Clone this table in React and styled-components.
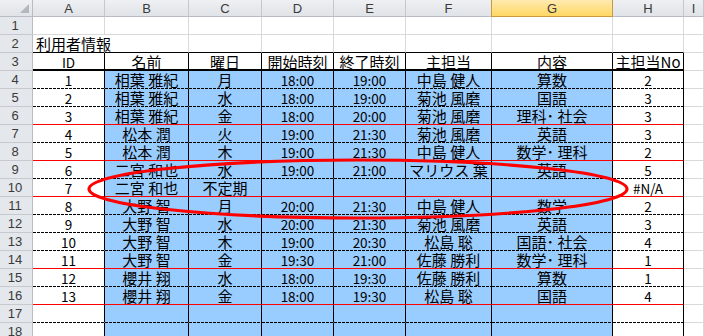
import React from 'react'
import styled, { createGlobalStyle } from 'styled-components'

const GlobalStyle = createGlobalStyle`
  html, body {
    margin: 0;
    padding: 0;
    background: #fff;
    overflow: hidden;
  }
`

const LETTERS = ['A', 'B', 'C', 'D', 'E', 'F', 'G', 'H', 'I']

// id, name, day, start, end, teacher, subject, teacherNo
const records = [
  ['1', '相葉 雅紀', '月', '18:00', '19:00', '中島 健人', '算数', '2'],
  ['2', '相葉 雅紀', '水', '18:00', '19:00', '菊池 風磨', '国語', '3'],
  ['3', '相葉 雅紀', '金', '18:00', '20:00', '菊池 風磨', '理科･ 社会', '3'],
  ['4', '松本 潤', '火', '19:00', '21:30', '菊池 風磨', '英語', '3'],
  ['5', '松本 潤', '木', '19:00', '21:30', '中島 健人', '数学･ 理科', '2'],
  ['6', '二宮 和也', '水', '19:00', '21:00', 'マリウス 葉', '英語', '5'],
  ['7', '二宮 和也', '不定期', '', '', '', '', '#N/A'],
  ['8', '大野 智', '月', '20:00', '21:30', '中島 健人', '数学', '2'],
  ['9', '大野 智', '水', '20:00', '21:30', '菊池 風磨', '英語', '3'],
  ['10', '大野 智', '木', '19:00', '20:30', '松島 聡', '国語･ 社会', '4'],
  ['11', '大野 智', '金', '19:30', '21:00', '佐藤 勝利', '数学･ 理科', '1'],
  ['12', '櫻井 翔', '水', '18:00', '19:30', '佐藤 勝利', '算数', '1'],
  ['13', '櫻井 翔', '金', '18:00', '19:30', '松島 聡', '国語', '4'],
  ['', '', '', '', '', '', '', ''],
  ['', '', '', '', '', '', '', ''],
]

// bottom border of sheet rows 4..18
const rowLines = ['dash', 'dash', 'red', 'dash', 'red', 'dash', 'red', 'dash', 'dash', 'dash', 'red', 'dash', 'red', 'dash', 'dash']

const headings = ['ID', '名前', '曜日', '開始時刻', '終了時刻', '主担当', '内容', '主担当No']

const bottomLine = {
  grid: '1px solid #d9d9d9',
  black: '1px solid #000',
  thick: '2px solid #000',
  red: '1px solid #ff0000',
  dash: '1px solid transparent',
}

const Sheet = styled.div`
  position: relative;
  width: 704px;
  height: 336px;
  overflow: hidden;
  font-family: "Noto Sans CJK JP", "Noto Sans", sans-serif;
  color: #000;
`

const Grid = styled.div`
  display: grid;
  grid-template-columns: 33px 72px 84px 73px 72px 72px 86px 121px 71px 20px;
  grid-template-rows: 17px;
  grid-auto-rows: 18px;
`

const Corner = styled.div`
  box-sizing: border-box;
  background: linear-gradient(#eef0f3, #e0e3e7);
  border-right: 1px solid #b9bdc3;
  border-bottom: 1px solid #b9bdc3;
  display: flex;
  align-items: flex-end;
  justify-content: flex-end;
  padding: 0 3px 3px 0;
`

const ColHead = styled.div`
  box-sizing: border-box;
  display: flex;
  align-items: center;
  justify-content: center;
  font-family: "Liberation Sans", Arial, sans-serif;
  font-size: 13px;
  color: #3a3a3a;
  background: ${p => p.$selected ? 'linear-gradient(#ffeab0, #ffd863)' : 'linear-gradient(#eef0f3, #e0e3e7)'};
  border-right: 1px solid ${p => p.$selected ? '#c99a3e' : '#c4c8cd'};
  border-left: ${p => p.$selected ? '1px solid #c99a3e' : 'none'};
  border-bottom: 1px solid ${p => p.$selected ? '#c99a3e' : '#b9bdc3'};
  margin-left: ${p => p.$selected ? '-1px' : '0'};
`

const RowHead = styled.div`
  box-sizing: border-box;
  display: flex;
  align-items: center;
  justify-content: center;
  font-family: "Liberation Sans", Arial, sans-serif;
  font-size: 13px;
  color: #3a3a3a;
  background: #e4e7eb;
  border-right: 1px solid #b9bdc3;
  border-bottom: 1px solid #c6cacf;
  padding-right: 2px;
`

const Cell = styled.div`
  box-sizing: border-box;
  position: relative;
  z-index: ${p => p.$spill ? 1 : 0};
  display: flex;
  justify-content: ${p => p.$left ? 'flex-start' : 'center'};
  padding: 0 ${p => p.$left ? '0 0 3px' : '1px'};
  white-space: nowrap;
  font-size: ${p => p.$small ? '13.5px' : '15px'};
  line-height: 18px;
  background-color: ${p => p.$blue ? '#99ccff' : '#fff'};
  border-right: ${p => p.$right === 'black' ? '1px solid #000' : p.$right === 'none' ? '1px solid transparent' : '1px solid #d9d9d9'};
  border-bottom: ${p => bottomLine[p.$bottom]};
  ${p => p.$bottom === 'dash' && `
    background-image: repeating-linear-gradient(90deg, #000 0 3px, transparent 3px 4px);
    background-size: 100% 1px;
    background-position: left bottom;
    background-repeat: no-repeat;
    background-origin: border-box;
  `}
`

const Overlay = styled.svg`
  position: absolute;
  left: 0;
  top: 0;
  pointer-events: none;
`

const isLatin = s => /^[0-9A-Za-z:#/]+$/.test(s)

const CornerMark = () => (
  <svg width="9" height="9" viewBox="0 0 9 9">
    <polygon points="9,0 9,9 0,9" fill="#b4b8bd" />
  </svg>
)

export default function App() {
  const rowsOut = []

  // row 1
  rowsOut.push(
    <RowHead key="r1">1</RowHead>,
    ...LETTERS.map((l, i) => <Cell key={`1${l}`} $right="grid" $bottom="grid" />),
  )

  // row 2
  rowsOut.push(
    <RowHead key="r2">2</RowHead>,
    ...LETTERS.map((l, i) => (
      <Cell
        key={`2${l}`}
        $left={i === 0}
        $spill={i === 0}
        $right={i === 0 ? 'none' : 'grid'}
        $bottom={i < 8 ? 'black' : 'grid'}
      >
        {i === 0 ? '利用者情報' : ''}
      </Cell>
    )),
  )

  // row 3 headings
  rowsOut.push(
    <RowHead key="r3">3</RowHead>,
    ...LETTERS.map((l, i) => (
      <Cell
        key={`3${l}`}
        $small={i === 0}
        $right={i < 8 ? 'black' : 'grid'}
        $bottom={i < 8 ? 'thick' : 'grid'}
      >
        {headings[i] || ''}
      </Cell>
    )),
  )

  records.forEach((rec, r) => {
    const n = r + 4
    const line = rowLines[r]
    rowsOut.push(<RowHead key={`r${n}`}>{n}</RowHead>)
    LETTERS.forEach((l, i) => {
      const text = rec[i] || ''
      rowsOut.push(
        <Cell
          key={`${n}${l}`}
          $blue={i >= 1 && i <= 6}
          $small={isLatin(text)}
          $right={i < 8 ? 'black' : 'grid'}
          $bottom={i < 8 ? line : 'grid'}
        >
          {text}
        </Cell>
      )
    })
  })

  return (
    <>
      <GlobalStyle />
      <Sheet>
        <Grid>
          <Corner><CornerMark /></Corner>
          {LETTERS.map(l => (
            <ColHead key={l} $selected={l === 'G'}>{l}</ColHead>
          ))}
          {rowsOut}
        </Grid>
        <Overlay width="704" height="336" viewBox="0 0 704 336">
          <ellipse cx="358" cy="189" rx="269" ry="29" fill="none" stroke="#ff0000" strokeWidth="3.2" />
        </Overlay>
      </Sheet>
    </>
  )
}
